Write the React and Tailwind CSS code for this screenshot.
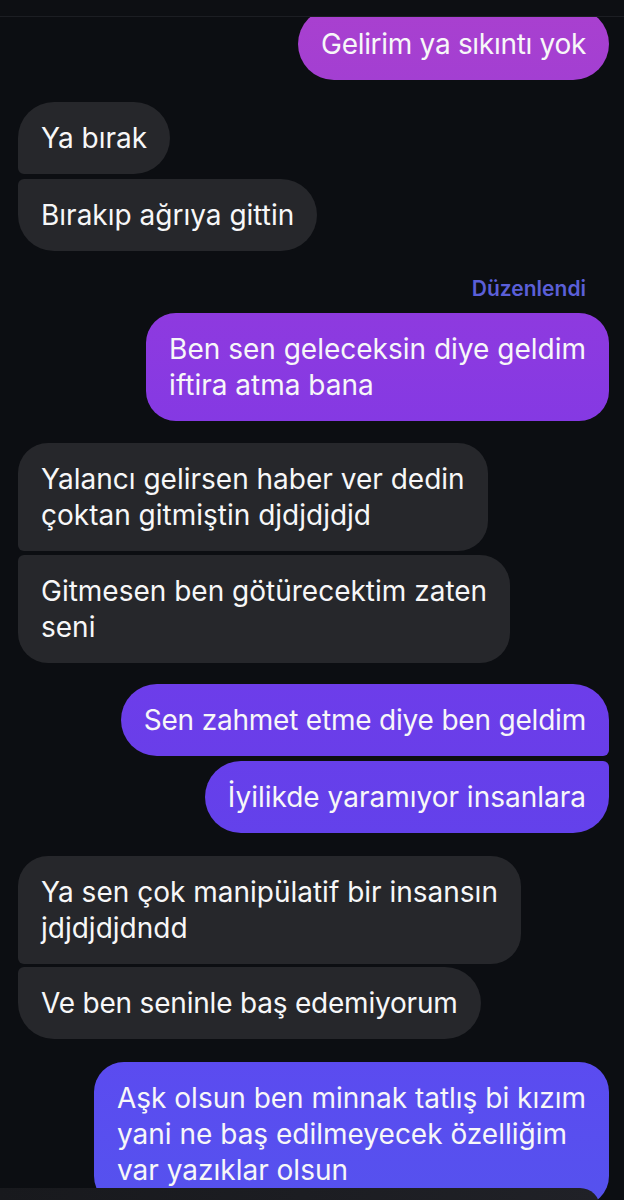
import React from 'react';

const Bubble = ({ side, lines, color, shape, className = '' }) => {
  const base =
    side === 'left'
      ? 'self-start ml-[18px] bg-[#26272b]'
      : 'self-end mr-[15px]';
  return (
    <div
      className={`${base} ${color || ''} ${shape} ${className} px-[23px] py-[18px] text-[28px] leading-[36px] text-[#f7f7f8] whitespace-nowrap`}
    >
      {lines.map((l, i) => (
        <div key={i}>{l}</div>
      ))}
    </div>
  );
};

const App = () => {
  return (
    <div className="relative w-[624px] h-[1200px] overflow-hidden bg-[#0c0e12] font-['Inter','Liberation_Sans',sans-serif]">
      {/* header edge */}
      <div className="relative z-10 h-[17px] bg-[#0d0f13] border-b border-[#1c1e23]" />

      <div className="flex flex-col -mt-[9px]">
        <Bubble
          side="right"
          lines={['Gelirim ya sıkıntı yok']}
          color="bg-gradient-to-b from-[#a940cf] to-[#a33fd2]"
          shape="rounded-[36px]"
          className="tracking-[-0.3px]"
        />

        <Bubble
          side="left"
          lines={['Ya bırak']}
          shape="rounded-[36px] rounded-bl-[6px]"
          className="mt-[22px]"
        />
        <Bubble
          side="left"
          lines={['Bırakıp ağrıya gittin']}
          shape="rounded-[36px] rounded-tl-[6px]"
          className="mt-[5px]"
        />

        <div className="self-end mr-[38px] mt-[25px] text-[21px] leading-[26px] font-semibold text-[#5b5fd8]">
          Düzenlendi
        </div>

        <Bubble
          side="right"
          lines={['Ben sen geleceksin diye geldim', 'iftira atma bana']}
          color="bg-gradient-to-b from-[#8e3adf] to-[#8539e3]"
          shape="rounded-[30px]"
          className="mt-[11px]"
        />

        <Bubble
          side="left"
          lines={['Yalancı gelirsen haber ver dedin', 'çoktan gitmiştin djdjdjdjd']}
          shape="rounded-[30px] rounded-bl-[6px]"
          className="mt-[22px]"
        />
        <Bubble
          side="left"
          lines={['Gitmesen ben götürecektim zaten', 'seni']}
          shape="rounded-[30px] rounded-tl-[6px]"
          className="mt-[4px]"
        />

        <Bubble
          side="right"
          lines={['Sen zahmet etme diye ben geldim']}
          color="bg-gradient-to-b from-[#6d3dea] to-[#693ee9]"
          shape="rounded-[36px] rounded-br-[6px]"
          className="mt-[21px] tracking-[-0.2px]"
        />
        <Bubble
          side="right"
          lines={['İyilikde yaramıyor insanlara']}
          color="bg-gradient-to-b from-[#673fea] to-[#6341eb]"
          shape="rounded-[36px] rounded-tr-[6px]"
          className="mt-[5px]"
        />

        <Bubble
          side="left"
          lines={['Ya sen çok manipülatif bir insansın', 'jdjdjdjdndd']}
          shape="rounded-[30px] rounded-bl-[6px]"
          className="mt-[23px]"
        />
        <Bubble
          side="left"
          lines={['Ve ben seninle baş edemiyorum']}
          shape="rounded-[36px] rounded-tl-[6px]"
          className="mt-[3px] tracking-[-0.2px]"
        />

        <Bubble
          side="right"
          lines={[
            'Aşk olsun ben minnak tatlış bi kızım',
            'yani ne baş edilmeyecek özelliğim',
            'var yazıklar olsun',
          ]}
          color="bg-gradient-to-b from-[#5b4bf0] to-[#5552ee]"
          shape="rounded-[30px]"
          className="mt-[23px]"
        />
      </div>

      {/* composer edge peeking at the bottom */}
      <div className="absolute left-0 right-[24px] top-[1188px] h-[20px] rounded-tr-[22px] bg-gradient-to-r from-[#18191d] to-[#202127]" />
    </div>
  );
};

export default App;
